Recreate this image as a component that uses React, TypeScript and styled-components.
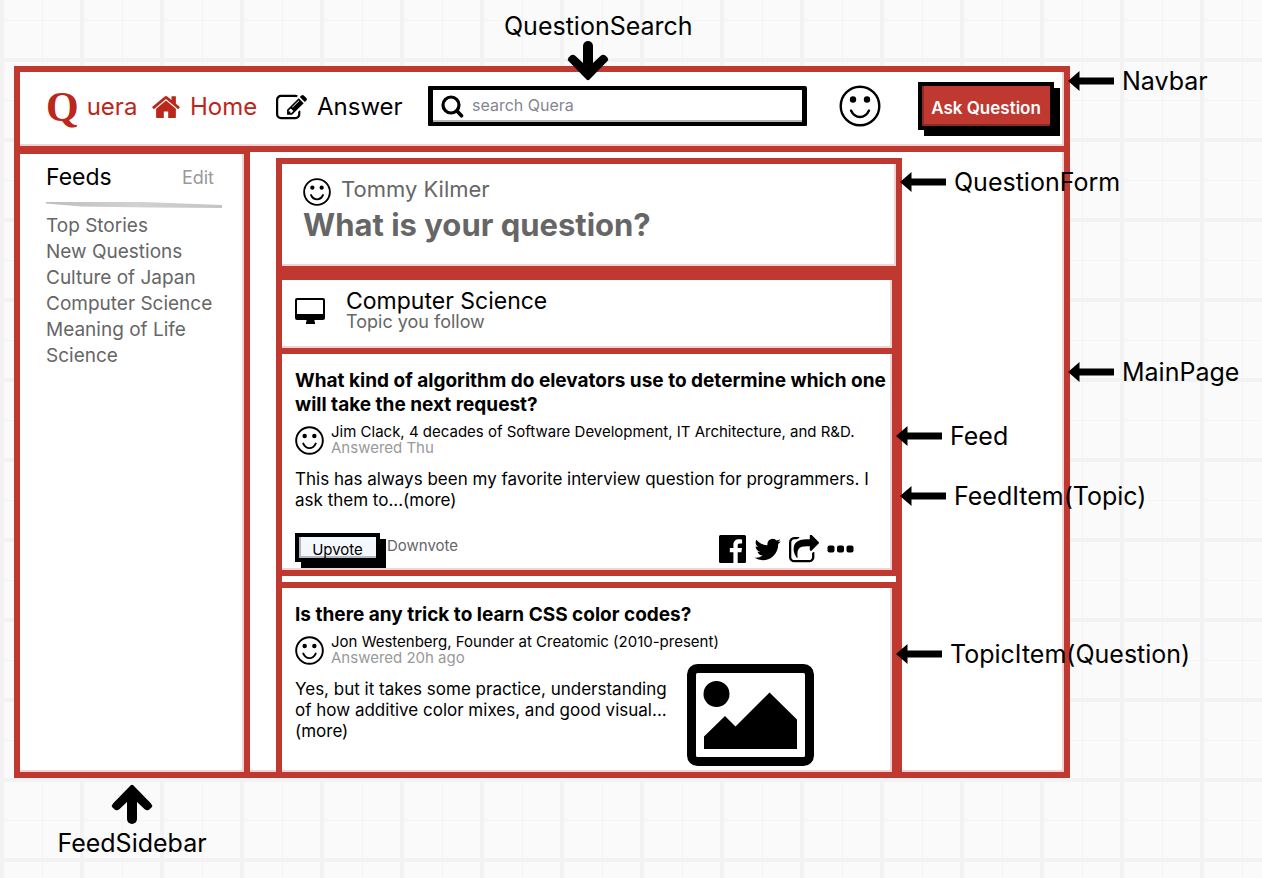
import React from "react";
import styled, { createGlobalStyle, css } from "styled-components";

const red = "#bf3930";
const brand = "#bc271b";
const line = `6px solid ${red}`;
const pale = css`
  box-shadow: inset -2px -2px 0 #f2d3d1;
`;

const GlobalStyle = createGlobalStyle`
  * { box-sizing: border-box; }
  body {
    margin: 0;
    min-height: 100vh;
    color: #000;
    font-family: Inter, "Liberation Sans", sans-serif;
    background-color: #fafafa;
    background-image:
      linear-gradient(90deg, #f2f2f2 4px, transparent 4px),
      linear-gradient(#f2f2f2 4px, transparent 4px),
      linear-gradient(90deg, #f4f4f4 1px, transparent 1px),
      linear-gradient(#f4f4f4 1px, transparent 1px);
    background-size: 80px 80px;
    background-position: 0 0, 0 58px, 42px 0, 0 20px;
  }
  h1, h2, h3, p, ul { margin: 0; padding: 0; }
  a { color: inherit; text-decoration: none; }
  button, input { font-family: inherit; }
  svg { display: block; flex: none; }
`;

const Page = styled.div`
  padding: 66px 192px 100px 14px;
`;

const MainPage = styled.div`
  position: relative;
  border: ${line};
  background: #fff;
  ${pale}
`;

const Navbar = styled.header`
  position: relative;
  display: flex;
  align-items: center;
  height: 80px;
  padding: 0 10px 6px 26px;
  border-bottom: ${line};
  ${pale}
`;

const Brand = styled.a`
  display: flex;
  align-items: center;
  gap: 8px;
  width: 106px;
  padding-top: 2px;
  color: ${brand};
  font-size: 24px;
  line-height: 32px;
`;

const BrandLetter = styled.span`
  font-family: "Liberation Serif", serif;
  font-size: 42px;
  font-weight: 700;
`;

const NavLink = styled.a<{ $active?: boolean; $width: number }>`
  display: flex;
  align-items: center;
  gap: 10px;
  width: ${(p) => p.$width}px;
  padding-top: 2px;
  color: ${(p) => (p.$active ? brand : "#000")};
  font-size: 24px;
  line-height: 32px;
`;

const SearchBox = styled.label`
  position: relative;
  display: flex;
  flex: 1;
  align-items: center;
  gap: 8px;
  height: 40px;
  padding: 0 8px;
  border: 5px solid #000;
  border-top-width: 4px;
  border-bottom-width: 4px;
  border-radius: 1px 2px 1px 1px;
  box-shadow: inset 0 -2px 0 #b5b5b5;
`;

const SearchInput = styled.input`
  flex: 1;
  min-width: 0;
  padding: 0 0 2px;
  border: 0;
  outline: 0;
  background: transparent;
  font-size: 16px;
  line-height: 20px;
  &::placeholder { color: #85858f; opacity: 1; }
`;

const Profile = styled.a`
  margin: 0 37px 0 32px;
`;

const SketchButton = styled.button<{ $primary?: boolean }>`
  width: ${(p) => (p.$primary ? 136 : 85)}px;
  height: ${(p) => (p.$primary ? 48 : 29)}px;
  padding: 4px 0 0;
  border: 4px solid #000;
  background: ${(p) => (p.$primary ? red : "#f3f8fd")};
  box-shadow: 6px 6px 0 #000, inset 1px -1px 0 1px ${(p) => (p.$primary ? "#8e2a24" : "#b3b7bb")};
  color: ${(p) => (p.$primary ? "#fff" : "#000")};
  font-size: ${(p) => (p.$primary ? 17 : 15)}px;
  font-weight: ${(p) => (p.$primary ? 600 : 400)};
  line-height: 18px;
  white-space: nowrap;
`;

const Body = styled.div`
  display: flex;
  gap: 26px;
  padding-right: 162px;
`;

const Sidebar = styled.aside`
  position: relative;
  flex: none;
  width: 230px;
  margin-top: -4px;
  padding: 9px 22px 0 26px;
  border-top: ${line};
  border-right: ${line};
  ${pale}
`;

const SidebarHead = styled.div`
  display: flex;
  align-items: center;
  justify-content: space-between;
  padding-right: 8px;
`;

const FeedsTitle = styled.h2`
  font-size: 23px;
  font-weight: 400;
  line-height: 28px;
`;

const EditLink = styled.a`
  color: #999;
  font-size: 18px;
`;

const Rule = styled.div`
  height: 6px;
  margin: 11px 0 5px;
  background: linear-gradient(90deg, #bdbdbd, #d2d2d2 50%, #c4c4c4);
  clip-path: polygon(0 0, 55% 0, 100% 50%, 100% 100%, 60% 90%, 20% 75%, 0 25%);
`;

const TopicList = styled.ul`
  list-style: none;
  color: #666;
  font-size: 19px;
  line-height: 26px;
  white-space: nowrap;
`;

const Column = styled.main`
  flex: 1;
  min-width: 0;
  padding-top: 6px;
`;

const QuestionForm = styled.section`
  position: relative;
  height: 114px;
  padding: 11px 21px;
  border: ${line};
  ${pale}
`;

const Asker = styled.div`
  display: flex;
  align-items: flex-start;
  gap: 10px;
  color: #666;
  font-size: 22px;
  line-height: 28px;
  svg { margin-top: 3px; }
`;

const Prompt = styled.h1`
  color: #666;
  font-size: 31px;
  font-weight: 700;
  line-height: 38px;
`;

const Feed = styled.section`
  position: relative;
  margin-top: -4px;
  border: ${line};
  border-bottom: 0;
`;

const FeedItem = styled.article<{ $last?: boolean }>`
  position: relative;
  margin-right: -2px;
  padding: 15px 0 0 13px;
  border-right: ${line};
  border-bottom: ${(p) => (p.$last ? "0" : line)};
  ${pale}
`;

const TopicHeader = styled(FeedItem)`
  display: flex;
  gap: 21px;
  height: 80px;
  padding-top: 10px;
  border-top: ${line};
  svg { margin-top: 8px; }
`;

const TopicName = styled.h2`
  font-size: 23px;
  font-weight: 400;
  line-height: 22px;
`;

const TopicNote = styled.p`
  color: #666;
  font-size: 18px;
  line-height: 20px;
`;

const QuestionItem = styled(FeedItem)<{ $spaced?: boolean }>`
  margin-top: ${(p) => (p.$spaced ? 6 : 0)}px;
  border-top: ${(p) => (p.$spaced ? line : "0")};
`;

const QuestionTitle = styled.h3`
  font-size: 19px;
  font-weight: 700;
  line-height: 24px;
  white-space: nowrap;
`;

const Author = styled.div`
  display: flex;
  align-items: center;
  gap: 7px;
  margin-top: 7px;
  font-size: 15px;
  line-height: 16px;
  white-space: nowrap;
`;

const Muted = styled.p`
  color: #999;
`;

const Excerpt = styled.p`
  flex: 1;
  margin-top: 13px;
  font-size: 17px;
  line-height: 21px;
  white-space: nowrap;
`;

const Actions = styled.div`
  display: flex;
  align-items: flex-start;
  height: 37px;
  margin-top: 22px;
  padding-right: 38px;
`;

const Downvote = styled.button`
  padding: 0;
  margin: 4px auto 0 7px;
  border: 0;
  background: none;
  color: #666;
  font-size: 15px;
  line-height: 18px;
`;

const Shares = styled.div`
  display: flex;
  align-items: center;
  gap: 8px;
  margin-top: 2px;
`;

const Media = styled.div`
  display: flex;
  align-items: flex-start;
  gap: 8px;
  padding: 0 78px 6px 0;
  svg { margin-top: -2px; }
`;

const Note = styled.div<{ $top: number; $shift: number }>`
  position: absolute;
  z-index: 2;
  top: ${(p) => p.$top}px;
  left: calc(100% + ${(p) => p.$shift}px);
  display: flex;
  align-items: center;
  gap: 8px;
  font-size: 25px;
  line-height: 30px;
  white-space: nowrap;
`;

const SearchNote = styled.div`
  position: absolute;
  z-index: 2;
  left: 71px;
  bottom: 41px;
  font-size: 25px;
  line-height: 30px;
  svg { margin-left: 63px; }
`;

const SidebarNote = styled.div`
  position: absolute;
  top: calc(100% + 12px);
  left: 0;
  right: 0;
  display: flex;
  flex-direction: column;
  align-items: center;
  gap: 4px;
  font-size: 25px;
  line-height: 30px;
`;

const Smiley = ({ size }: { size: number }) => (
  <svg width={size} height={size} viewBox="0 0 42 42" fill="none" stroke="#000" strokeWidth={size > 30 ? 2.4 : 2.8} strokeLinecap="round">
    <circle cx="21" cy="21" r="19.3" />
    <circle cx="14" cy="14.5" r="3.2" fill="#000" stroke="none" />
    <circle cx="28" cy="14.5" r="3.2" fill="#000" stroke="none" />
    <path d="M12 25.500c2 4.300 5.500 6.500 9 6.500s7-2.200 9-6.500" />
  </svg>
);

const LeftArrow = () => (
  <svg width="46" height="20" viewBox="0 0 46 20">
    <path d="M0 10 11.500 0v6.500H46v7H11.500V20z" />
  </svg>
);

const BlockArrow = ({ up }: { up?: boolean }) => (
  <svg width="42" height="40" viewBox="0 0 42 40">
    <g transform={up ? "rotate(180 21 20)" : undefined}>
      <path d="M21 5v20" stroke="#000" strokeWidth="10" strokeLinecap="round" />
      <path d="M1.500 16.500Q0 18.500 2 20.500L19.500 38.500Q21 40 22.500 38.500L40 20.500Q42 18.500 40.500 16.500L38 14.200Q36 13 34 14.500L26 22H16L8 14.500Q6 13 4 14.200z" />
    </g>
  </svg>
);

const HomeIcon = () => (
  <svg width="28" height="24" viewBox="80 230 1632 1316" fill="currentColor">
    <path d="M1472 992v480q0 26-19 45t-45 19h-384v-384h-256v384h-384q-26 0-45-19t-19-45v-480q0-1 .5-3t.5-3l575-474 575 474q1 2 1 6zm223-69l-62 74q-8 9-21 11h-3q-13 0-21-7l-692-577-692 577q-12 8-24 7-13-2-21-11l-62-74q-8-10-7-23.500t11-21.500l719-599q32-26 76-26t76 26l244 204v-195q0-14 9-23t23-9h192q14 0 23 9t9 23v408l219 182q10 8 11 21.500t-7 23.500z" />
  </svg>
);

const PencilIcon = () => (
  <svg width="31" height="26" viewBox="0 110 1792 1440">
    <path d="M888 1184l116-116-152-152-116 116v56h96v96h56zm440-720q-16-16-33 1l-350 350q-17 17-1 33t33-1l350-350q17-17 1-33zm80 594v190q0 119-84.500 203.500t-203.500 84.500h-832q-119 0-203.500-84.500t-84.500-203.500v-832q0-119 84.500-203.500t203.500-84.500h832q63 0 117 25 15 7 18 23 3 17-9 29l-49 49q-14 14-32 8-23-6-45-6h-832q-66 0-113 47t-47 113v832q0 66 47 113t113 47h832q66 0 113-47t47-113v-126q0-13 9-22l64-64q15-15 35-7t20 29zm-96-738l288 288-672 672h-288v-288zm444 132l-92 92-288-288 92-92q28-28 68-28t68 28l152 152q28 28 28 68t-28 68z" />
  </svg>
);

const SearchIcon = () => (
  <svg width="23" height="23" viewBox="0 0 23 23" fill="none" stroke="#000" strokeLinecap="round">
    <circle cx="10" cy="10" r="8" strokeWidth="3.200" />
    <path d="m16 16 4.500 4.800" strokeWidth="3.600" />
  </svg>
);

const MonitorIcon = () => (
  <svg width="30" height="26" viewBox="0 0 30 26">
    <path fillRule="evenodd" d="M2 0h26a2 2 0 0 1 2 2v18a2 2 0 0 1-2 2h-8.500v1.500q.5.300.5 1V26h-9v-1.500q0-.700.500-1V22H2a2 2 0 0 1-2-2V2a2 2 0 0 1 2-2zM2.500 2a.5.5 0 0 0-.5.5V16h26V2.500a.5.5 0 0 0-.5-.5z" />
  </svg>
);

const FacebookIcon = () => (
  <svg width="27" height="28" viewBox="0 0 27 28">
    <path d="M1.500 0h24A1.500 1.500 0 0 1 27 1.500v25a1.500 1.500 0 0 1-1.500 1.500h-6.800V17.300h3.700l.6-4.300h-4.300v-2.600c0-1.300.5-2 2.100-2h2.300V4.500c-.5-.1-1.700-.2-3.200-.2-3.300 0-5.500 2-5.500 5.500V13h-3.600v4.300h3.600V28H1.500A1.500 1.500 0 0 1 0 26.500v-25A1.500 1.500 0 0 1 1.500 0z" />
  </svg>
);

const TwitterIcon = () => (
  <svg width="27" height="23" viewBox="76 250 1616 1300">
    <path d="M1684 408q-67 98-162 167 1 14 1 42 0 130-38 259.500t-115.500 248.500-184.500 210.500-258 146-323 54.500q-271 0-496-145 35 4 78 4 225 0 401-138-105-2-188-64.500t-114-159.500q33 5 61 5 43 0 85-11-112-23-185.500-111.500t-73.500-205.500v-4q68 38 146 41-66-44-105-115t-39-154q0-88 44-163 121 149 294.500 238.500t371.500 99.500q-8-38-8-74 0-134 94.500-228.500t228.500-94.500q140 0 236 102 109-21 205-78-37 115-142 178 93-10 186-50z" />
  </svg>
);

const ShareIcon = () => (
  <svg width="30" height="28" viewBox="0 40 1664 1510">
    <path d="M1408 989v259q0 119-84.500 203.500t-203.500 84.500h-832q-119 0-203.500-84.500t-84.500-203.500v-832q0-119 84.500-203.500t203.500-84.500h255q13 0 22.500 9.500t9.500 22.500q0 27-26 32-77 26-133 60-10 4-16 4h-112q-66 0-113 47t-47 113v832q0 66 47 113t113 47h832q66 0 113-47t47-113v-214q0-19 18-29 28-13 54-37 16-16 35-8 21 9 21 29zm237-496l-384 384q-18 19-45 19-12 0-25-5-39-17-39-59v-192h-160q-323 0-438 131-119 137-74 473 3 23-20 34-8 2-12 2-16 0-26-13-10-14-21-31t-39.500-68.500-49.500-99.500-38.500-114-17.500-122q0-49 3.500-91t14-90 28-88 47-81.500 68.500-74 94.500-61.500 124.500-48.500 159.500-30.500 196.500-11h160v-192q0-42 39-59 13-5 25-5 26 0 45 19l384 384q19 19 19 45t-19 45z" />
  </svg>
);

const DotsIcon = () => (
  <svg width="27" height="8" viewBox="0 0 27 8">
    <rect x="0.500" y="0.500" width="7" height="7" rx="2" />
    <rect x="10" y="0.500" width="7" height="7" rx="2" />
    <rect x="19.500" y="0.500" width="7" height="7" rx="2" />
  </svg>
);

const PictureIcon = () => (
  <svg width="127" height="102" viewBox="0 0 127 102">
    <rect x="4.500" y="4.500" width="118" height="93" rx="6" fill="#fff" stroke="#000" strokeWidth="9" />
    <circle cx="29.500" cy="30" r="13" />
    <path d="M17 85V72.500L38 52l10.500 10.500L82.500 28.500 110 55.500V85z" />
  </svg>
);

const topics = ["Top Stories", "New Questions", "Culture of Japan", "Computer Science", "Meaning of Life", "Science"];

export default function App() {
  return (
    <Page>
      <GlobalStyle />
      <MainPage>
        <Navbar>
          <Brand href="#"><BrandLetter>Q</BrandLetter>uera</Brand>
          <NavLink href="#" $active $width={124}><HomeIcon />Home</NavLink>
          <NavLink href="#" $width={152}><PencilIcon />Answer</NavLink>
          <SearchBox>
            <SearchIcon />
            <SearchInput type="search" placeholder="search Quera" aria-label="search Quera" />
            <SearchNote>QuestionSearch<BlockArrow /></SearchNote>
          </SearchBox>
          <Profile href="#" aria-label="Profile"><Smiley size={42} /></Profile>
          <SketchButton $primary type="button">Ask Question</SketchButton>
          <Note $top={-6} $shift={4}><LeftArrow />Navbar</Note>
        </Navbar>
        <Body>
          <Sidebar>
            <SidebarHead>
              <FeedsTitle>Feeds</FeedsTitle>
              <EditLink href="#">Edit</EditLink>
            </SidebarHead>
            <Rule />
            <TopicList>
              {topics.map((t) => <li key={t}><a href="#">{t}</a></li>)}
            </TopicList>
            <SidebarNote><BlockArrow up />FeedSidebar</SidebarNote>
          </Sidebar>
          <Column>
            <QuestionForm>
              <Asker><Smiley size={28} />Tommy Kilmer</Asker>
              <Prompt>What is your question?</Prompt>
              <Note $top={3} $shift={4}><LeftArrow />QuestionForm</Note>
            </QuestionForm>
            <Feed>
              <TopicHeader>
                <MonitorIcon />
                <div>
                  <TopicName>Computer Science</TopicName>
                  <TopicNote>Topic you follow</TopicNote>
                </div>
              </TopicHeader>
              <QuestionItem>
                <QuestionTitle>What kind of algorithm do elevators use to determine which one<br />will take the next request?</QuestionTitle>
                <Author>
                  <Smiley size={29} />
                  <div>
                    <p>Jim Clack, 4 decades of Software Development, IT Architecture, and R&amp;D.</p>
                    <Muted>Answered Thu</Muted>
                  </div>
                </Author>
                <Excerpt>This has always been my favorite interview question for programmers. I<br />ask them to...(more)</Excerpt>
                <Actions>
                  <SketchButton type="button">Upvote</SketchButton>
                  <Downvote type="button">Downvote</Downvote>
                  <Shares>
                    <a href="#" aria-label="Facebook"><FacebookIcon /></a>
                    <a href="#" aria-label="Twitter"><TwitterIcon /></a>
                    <a href="#" aria-label="Share"><ShareIcon /></a>
                    <a href="#" aria-label="More"><DotsIcon /></a>
                  </Shares>
                </Actions>
                <Note $top={127} $shift={8}><LeftArrow />FeedItem(Topic)</Note>
              </QuestionItem>
              <QuestionItem $spaced $last>
                <QuestionTitle>Is there any trick to learn CSS color codes?</QuestionTitle>
                <Author>
                  <Smiley size={29} />
                  <div>
                    <p>Jon Westenberg, Founder at Creatomic (2010-present)</p>
                    <Muted>Answered 20h ago</Muted>
                  </div>
                </Author>
                <Media>
                  <Excerpt>Yes, but it takes some practice, understanding<br />of how additive color mixes, and good visual...<br />(more)</Excerpt>
                  <PictureIcon />
                </Media>
                <Note $top={51} $shift={4}><LeftArrow />TopicItem(Question)</Note>
              </QuestionItem>
              <Note $top={147} $shift={0}><LeftArrow />Feed</Note>
            </Feed>
          </Column>
        </Body>
        <Note $top={285} $shift={4}><LeftArrow />MainPage</Note>
      </MainPage>
    </Page>
  );
}
